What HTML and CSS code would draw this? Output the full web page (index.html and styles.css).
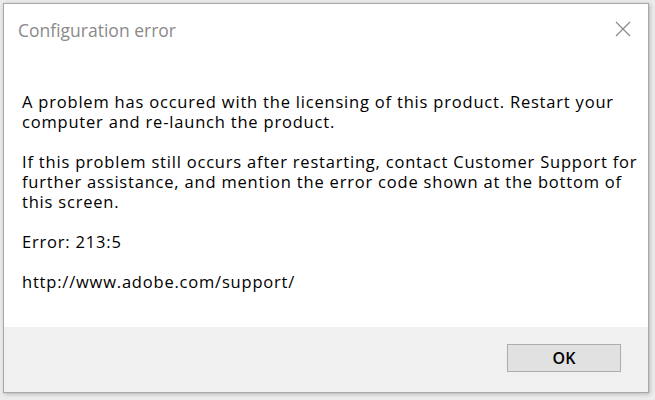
FILE: index.html
```html
<!DOCTYPE html>
<html>
<head>
<meta charset="utf-8">
<link rel="stylesheet" href="styles.css">
</head>
<body>
<div class="window">
  <div class="titlebar">
    <span class="title">Configuration error</span>
    <button class="close" aria-label="Close">
      <svg width="16" height="16" viewBox="0 0 16 16"><path d="M1 1 L15 15 M15 1 L1 15" stroke="#8a8a8a" stroke-width="1.2" fill="none"/></svg>
    </button>
  </div>
  <div class="content">
    <p>A problem has occured with the licensing of this product. Restart your<br>computer and re-launch the product.</p>
    <p>If this problem still occurs after restarting, contact Customer Support for<br>further assistance, and mention the error code shown at the bottom of<br>this screen.</p>
    <p>Error: 213:5</p>
    <p>http://www.adobe.com/support/</p>
  </div>
  <div class="footer">
    <button class="ok">OK</button>
  </div>
</div>
</body>
</html>
```
FILE: styles.css
```css
html, body {
  margin: 0;
  padding: 0;
}
body {
  width: 655px;
  height: 400px;
  background: #ececec;
  font-family: "Open Sans", "Noto Sans", sans-serif;
  overflow: hidden;
}
.window {
  margin: 3px 0 0 3px;
  width: 644px;
  height: 388px;
  border: 1px solid #a8a8a8;
  background: #ffffff;
  box-shadow: 1px 1px 4px rgba(0,0,0,0.25);
  display: flex;
  flex-direction: column;
}
.titlebar {
  height: 60px;
  display: flex;
  align-items: flex-start;
  justify-content: space-between;
}
.title {
  padding: 14px 0 0 14px;
  font-size: 17.5px;
  line-height: 24px;
  color: #8a8a8a;
}
.close {
  margin: 17px 17px 0 0;
  padding: 0;
  border: 0;
  background: transparent;
  width: 16px;
  height: 16px;
  display: flex;
}
.content {
  flex: 1;
  padding: 28px 18px 0 18px;
  font-size: 16.5px;
  font-weight: 500;
  letter-spacing: 0.8px;
  line-height: 20px;
  color: #000;
}
.content p {
  margin: 0 0 20px 0;
  white-space: nowrap;
}
.footer {
  height: 65px;
  background: #f0f0f0;
  display: flex;
  justify-content: flex-end;
  align-items: flex-start;
  padding: 17px 27px 0 0;
  box-sizing: border-box;
}
.ok {
  width: 114px;
  height: 28px;
  background: #e1e1e1;
  border: 1px solid #adadad;
  font-family: "Open Sans", "Noto Sans", sans-serif;
  font-size: 16px;
  font-weight: 600;
  color: #000;
  padding: 0;
}
```
